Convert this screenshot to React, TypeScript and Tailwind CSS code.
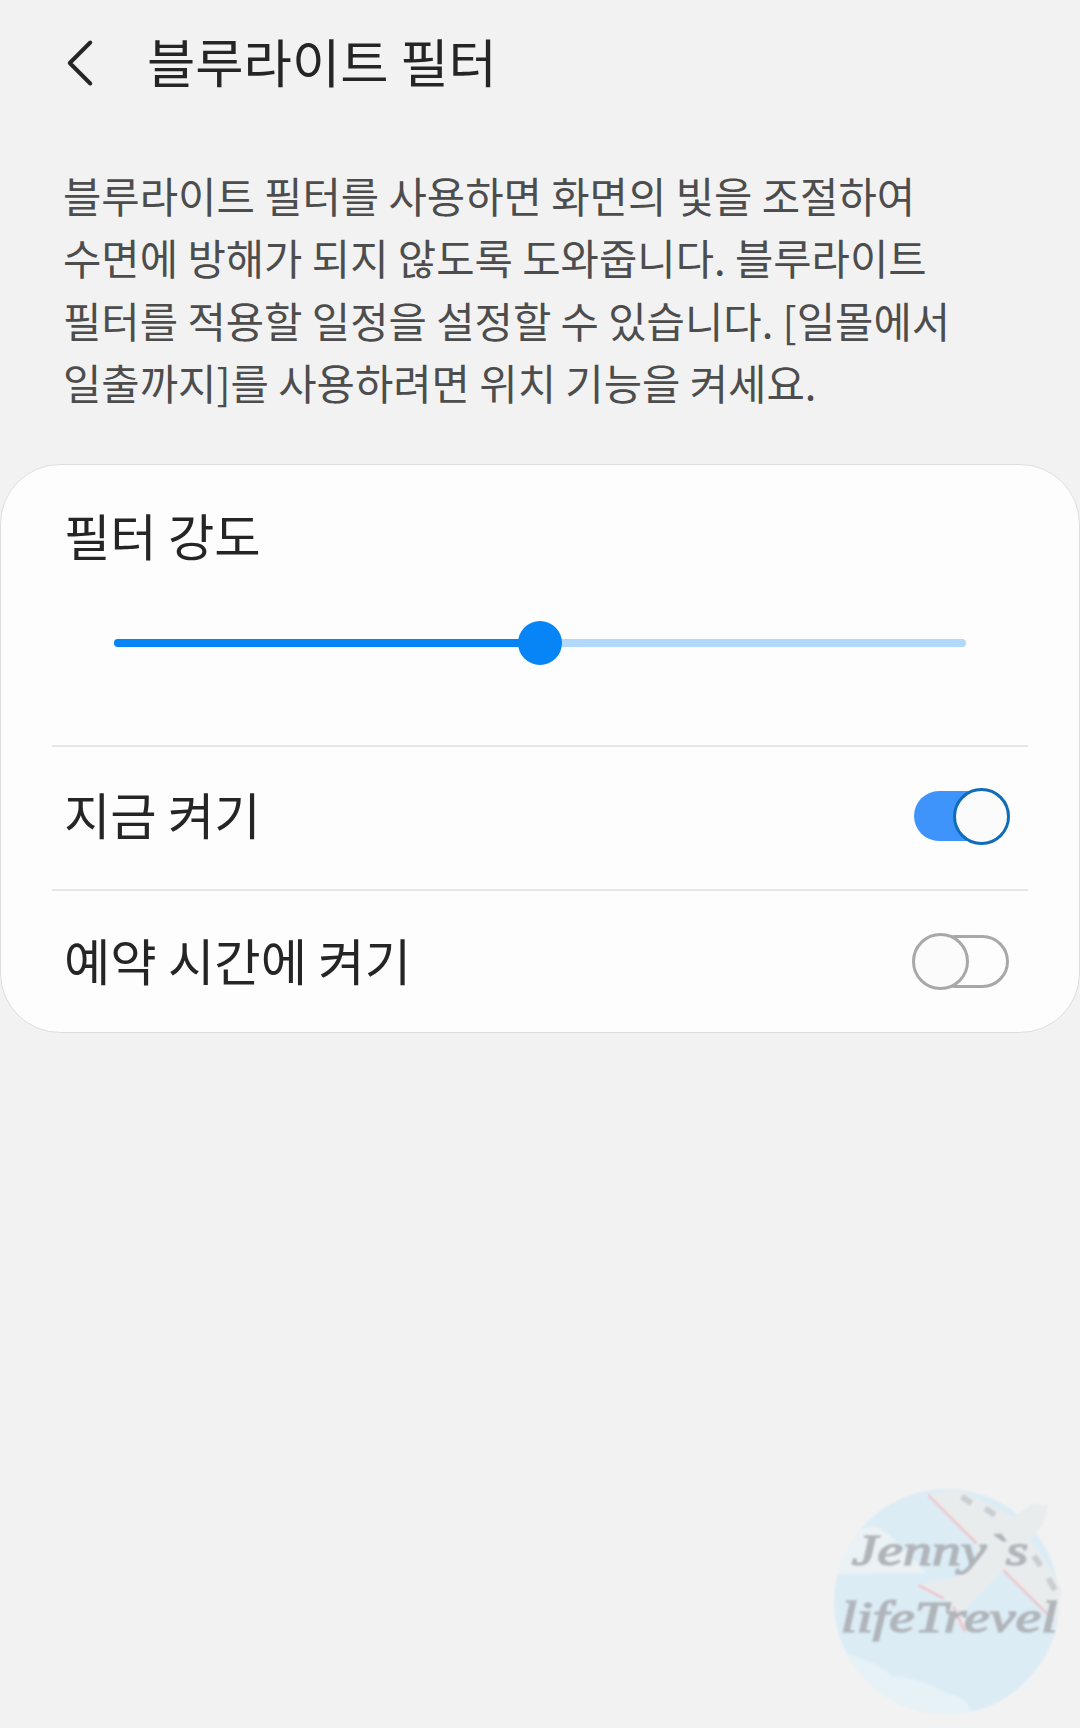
import { ChevronLeft } from "lucide-react";

const font = "font-['Noto_Sans_CJK_KR','Noto_Sans',sans-serif]";

// drawn in the coordinates of a 3x crop of the corner, so it's easy to compare
function Watermark() {
  return (
    <svg
      className="absolute left-[820px] top-[1480px]"
      width="260"
      height="248"
      viewBox="120 90 780 744"
    >
      <defs>
        <clipPath id="globe">
          <circle cx="500" cy="455" r="338" />
        </clipPath>
        <filter id="soft">
          <feGaussianBlur stdDeviation="3.5" />
        </filter>
      </defs>
      <g filter="url(#soft)">
        <circle cx="500" cy="455" r="338" fill="#dcecf5" />
        <g clipPath="url(#globe)">
          <path d="M150 372 L170 290 C210 250 260 220 300 235 C350 270 390 320 440 368 Z" fill="#ebf2f5" />
          <path d="M190 610 C240 620 290 640 340 680 C400 680 470 710 500 730 C540 735 570 760 580 800 L200 810 Z" fill="#e7f2f7" />
        </g>
        <path
          d="M445 130 L540 122 L700 200 L760 160 L805 165 L790 220 L750 270 L800 340 L845 420 L830 510 L670 360 L560 470 L555 545 L490 440 L415 405 L520 385 L590 340 L590 280 Z"
          fill="#e9eced"
        />
        <path
          d="M445 135 L590 280 M670 360 L820 510 M415 405 L490 445 M520 470 L555 545"
          stroke="#efbfc3"
          strokeWidth="7"
          fill="none"
        />
        <path
          d="M545 140 L575 160 M615 175 L645 195 M762 318 L782 348 M805 385 L825 420"
          stroke="#c8ced2"
          strokeWidth="18"
          fill="none"
        />
        <text
          x="215"
          y="345"
          fill="#b0b5ba"
          stroke="#b0b5ba"
          strokeWidth="5"
          fontSize="135"
          fontStyle="italic"
          fontFamily="'Liberation Serif', serif"
          textLength="530"
          lengthAdjust="spacingAndGlyphs"
        >
          Jenny`s
        </text>
        <text
          x="182"
          y="545"
          fill="#b0b5ba"
          stroke="#b0b5ba"
          strokeWidth="5"
          fontSize="135"
          fontStyle="italic"
          fontFamily="'Liberation Serif', serif"
          textLength="650"
          lengthAdjust="spacingAndGlyphs"
        >
          lifeTrevel
        </text>
      </g>
    </svg>
  );
}

export default function App() {
  return (
    <div className={`relative h-[1728px] w-[1080px] overflow-hidden bg-[#f2f2f2] ${font}`}>
      <header className="flex h-[120px] items-center pl-[39px]">
        <ChevronLeft className="mt-[5px] h-[82px] w-[82px] text-[#252525]" strokeWidth={1.15} />
        <h1 className="ml-[26px] text-[52.5px] leading-none text-[#252525]">블루라이트 필터</h1>
      </header>

      <p className="mt-[44px] pl-[63px] text-[41.7px] leading-[62.3px] text-[#4d4d4d] whitespace-nowrap">
        블루라이트 필터를 사용하면 화면의 빛을 조절하여
        <br />
        수면에 방해가 되지 않도록 도와줍니다. 블루라이트
        <br />
        필터를 적용할 일정을 설정할 수 있습니다. [일몰에서
        <br />
        일출까지]를 사용하려면 위치 기능을 켜세요.
      </p>

      <section className="mt-[51px] h-[569px] rounded-[60px] border border-[#dedede] bg-[#fdfdfd] text-[#252525]">
        <div className="h-[280px] px-[63px] pt-[39px]">
          <div className="text-[50.4px] leading-[62px]">필터 강도</div>
          <div className="relative mx-[50px] mt-[73px] h-[8px] rounded-full bg-[#b0d9fb]">
            <div className="h-full w-1/2 rounded-full bg-[#0784f5]" />
            <div className="absolute left-1/2 top-1/2 h-[44px] w-[44px] -translate-x-1/2 -translate-y-1/2 rounded-full bg-[#0784f5]" />
          </div>
        </div>

        <div className="mx-[51px] flex h-[144px] items-center justify-between border-t-2 border-[#e6e6e6] pl-[12px] pr-[18px]">
          <span className="mb-[7px] text-[50.4px] leading-none">지금 켜기</span>
          <div className="relative mb-[4px] h-[50px] w-[96px]">
            <div className="absolute left-0 top-0 h-[50px] w-[80px] rounded-full bg-[#3f94fb]" />
            <div className="absolute right-0 top-[-3px] h-[57px] w-[57px] rounded-full border-[3px] border-[#0f6cb8] bg-[#fbfbfb]" />
          </div>
        </div>

        <div className="mx-[51px] flex h-[143px] items-center justify-between border-t-2 border-[#e6e6e6] pl-[12px] pr-[19px]">
          <span className="mb-[3px] text-[50.4px] leading-none">예약 시간에 켜기</span>
          <div className="relative h-[53px] w-[97px]">
            <div className="absolute right-0 top-0 h-[53px] w-[80px] rounded-full border-[3px] border-[#a8a8a8]" />
            <div className="absolute left-0 top-[-2px] h-[57px] w-[57px] rounded-full border-[3px] border-[#a8a8a8] bg-[#fbfbfb]" />
          </div>
        </div>
      </section>

      <Watermark />
    </div>
  );
}
